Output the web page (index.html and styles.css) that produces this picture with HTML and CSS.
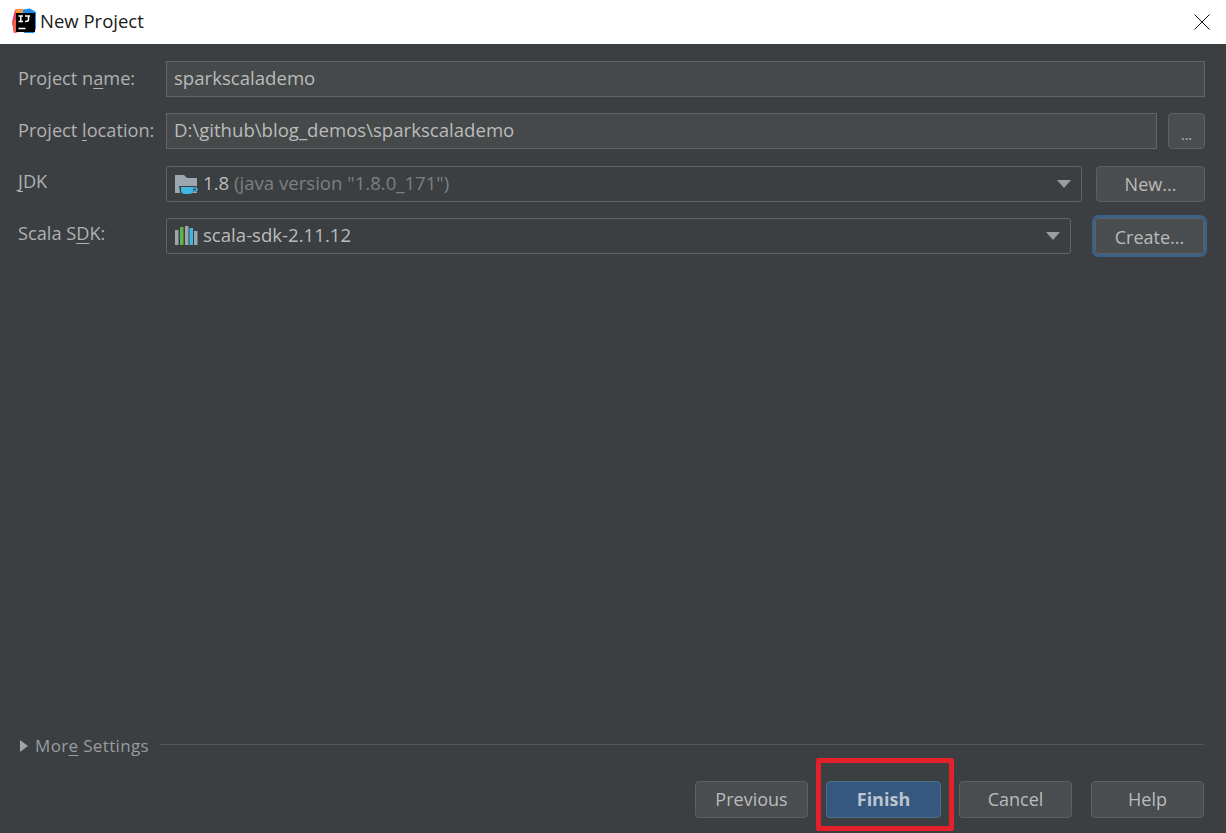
FILE: index.html
```html
<!DOCTYPE html>
<html lang="en">
<head>
<meta charset="utf-8">
<title>New Project</title>
<link rel="stylesheet" href="styles.css">
</head>
<body>
<div class="dialog">
  <header class="titlebar">
    <svg class="app-icon" width="26" height="26" viewBox="0 0 26 26">
      <path d="M4 1.500 L11 1 L8 24 L3 25 L1 14Z" fill="#e8386d"/>
      <path d="M1 14 L6 10 L7 22 L3 25Z" fill="#f0604a"/>
      <path d="M4 1.500 L12 1 L12 6 L5 6Z" fill="#f89b3c"/>
      <path d="M12 1.500 L19 0.500 L25 4 L25 20 L23 25 L13 25 L12 6Z" fill="#1f8ceb"/>
      <rect x="5" y="5" width="19" height="19" fill="#000"/>
      <path class="logo-mark" d="M7.500 8h4.500M9.750 8v5.500M7.500 13.500h4.500M14 8h5M17.500 8v4q0 1.500-3.500 1.500M7.500 20.500h7"/>
    </svg>
    <span class="title">New Project</span>
    <svg class="close" width="16" height="16" viewBox="0 0 16 16"><path d="M.5.500l15 15M15.500.500l-15 15"/></svg>
  </header>

  <main class="content">
    <div class="form">
      <div class="row">
        <label class="label">Project n<u>a</u>me:</label>
        <div class="field grow">sparkscalademo</div>
      </div>
      <div class="row">
        <label class="label">Project <u>l</u>ocation:</label>
        <div class="field grow">D:\github\blog_demos\sparkscalademo</div>
        <button class="btn dots">...</button>
      </div>
      <div class="row">
        <label class="label label-raised"><u>J</u>DK</label>
        <div class="combo grow">
          <svg class="combo-icon" width="24" height="24" viewBox="0 0 24 24">
            <path d="M0 3h9l3 3h10v15H0z" fill="#9aa7b0"/>
            <path d="M4 14h15.500q4 0 4 3t-4 3h-2q-2 3-5 3h-3q-5 0-5-6z" fill="#3c3f41"/>
            <path d="M6 15h12v3q0 4-4 4H10q-4 0-4-4z" fill="#40b6e0"/>
            <path d="M18 16h2q2 0 2 1.500T20 19h-2" fill="none" stroke="#40b6e0" stroke-width="1.500"/>
          </svg>
          <span class="combo-text">1.8 <span class="muted">(java version "1.8.0_171")</span></span>
          <span class="arrow"></span>
        </div>
        <button class="btn new">New...</button>
      </div>
      <div class="row">
        <label class="label label-raised">Scala S<u>D</u>K:</label>
        <div class="combo grow">
          <svg class="combo-icon sdk-icon" width="23" height="22" viewBox="0 0 23 22">
            <rect x="0" y="5" width="3.500" height="15" fill="#9aa7b0"/>
            <rect x="5" y="2" width="3.500" height="18" fill="#62b543"/>
            <rect x="10" y="1" width="3.500" height="19" fill="#9aa7b0"/>
            <rect x="14.500" y="3" width="3.500" height="17" fill="#40b6e0"/>
            <rect x="19" y="6" width="3.500" height="14" fill="#9aa7b0"/>
          </svg>
          <span class="combo-text">scala-sdk-2.11.12</span>
          <span class="arrow"></span>
        </div>
        <button class="btn create">Create...</button>
      </div>
    </div>

    <div class="more">
      <span class="triangle"></span>
      <span class="more-text">Mor<u>e</u> Settings</span>
      <span class="rule"></span>
    </div>

    <footer class="actions">
      <button class="btn action">Previous</button>
      <button class="btn action primary">Finish</button>
      <button class="btn action">Cancel</button>
      <button class="btn action">Help</button>
    </footer>
  </main>
</div>
</body>
</html>
```
FILE: styles.css
```css
* { box-sizing: border-box; }
html, body { margin: 0; height: 100%; }
body { font-family: "Open Sans", "Noto Sans", sans-serif; background: #3c3f41; overflow: hidden; }
u { text-underline-offset: 3px; text-decoration-thickness: 1px; }

.dialog { width: 1226px; height: 833px; display: flex; flex-direction: column; }

.titlebar { height: 44px; background: #fff; display: flex; align-items: center; padding: 0 16px 2px 11px; flex: none; }
.app-icon { flex: none; margin-right: 3px; }
.logo-mark { fill: none; stroke: #fff; stroke-width: 1.500; }
.title { font-size: 18.500px; color: #1a1a1a; padding-bottom: 2px; }
.close { margin-left: auto; margin-top: 2px; }
.close path { stroke: #111; stroke-width: 1; fill: none; }

.content { flex: 1; display: flex; flex-direction: column; padding: 17px 21px 15px 18px; position: relative; }
.form { display: flex; flex-direction: column; gap: 16.330px; }
.row { display: flex; align-items: center; height: 36px; }
.label { width: 148px; flex: none; font-size: 18.200px; color: #afb1b3; margin-bottom: 3px; }
.label-raised { margin-bottom: 5px; }
.grow { flex: 1; min-width: 0; }

.field { height: 36px; background: #45494a; border: 1px solid #646464; color: #bbb; font-size: 18.600px; line-height: 31px; padding: 0 7px; }

.combo { height: 36px; border: 1px solid #646464; border-radius: 3px; display: flex; align-items: center; padding: 0 8px; background: #3c3f41; color: #bbb; font-size: 18.600px; }
.combo-icon { flex: none; margin-right: 4px; }
.sdk-icon { margin-right: 5px; }
.combo-text { white-space: pre; padding-bottom: 2px; }
.muted { color: #7d7f80; }
.arrow { margin-left: auto; margin-right: 2px; width: 0; height: 0; border-left: 7px solid transparent; border-right: 7px solid transparent; border-top: 8px solid #9a9c9e; }

.btn { font-family: inherit; font-size: 18px; color: #bbb; background: #4a4d4f; border: 1px solid #5e6060; border-radius: 4px; height: 36px; padding: 0; }
.dots { width: 37px; margin-left: 11px; font-size: 14px; padding-top: 6px; }
.new { width: 109px; margin-left: 14px; }
.create { width: 109px; margin-left: 24px; margin-right: 1px; padding-top: 2px; border-color: #55626c; outline: 3px solid #3d6185; }

.more { margin-top: auto; display: flex; align-items: center; height: 24px; color: #989c9f; font-size: 17px; letter-spacing: .35px; }
.triangle { width: 0; height: 0; border-top: 6px solid transparent; border-bottom: 6px solid transparent; border-left: 8px solid #a0a4a7; margin: 0 7px 0 2px; }
.more-text { white-space: nowrap; padding-bottom: 2px; }
.rule { flex: 1; height: 1px; background: #54575a; margin-left: 11px; margin-right: 1px; margin-top: -3px; }

.actions { display: flex; justify-content: flex-end; gap: 18px; margin-top: 23px; padding-right: 1px; }
.action { width: 113px; height: 37px; padding-bottom: 2px; }
.action:last-child { margin-left: 1px; }
.primary { position: relative; width: 115px; background: #365880; border-color: #4c708c; color: #bbc4cf; font-weight: 700; }
.primary::after { content: ""; box-sizing: border-box; position: absolute; left: -11px; top: -24px; width: 138px; height: 73px; border: 5px solid #e3202c; border-radius: 2px; pointer-events: none; }
```
